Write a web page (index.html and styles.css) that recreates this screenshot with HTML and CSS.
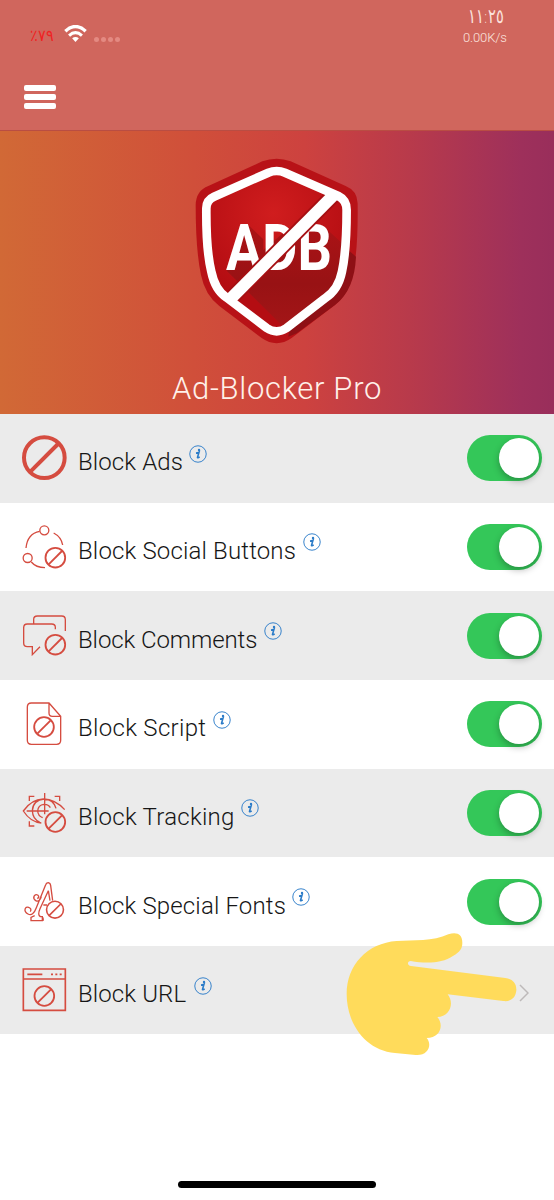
FILE: index.html
```html
<!DOCTYPE html>
<html lang="en">
<head>
<meta charset="utf-8">
<title>Ad-Blocker Pro</title>
<link rel="stylesheet" href="styles.css">
</head>
<body>
<svg class="defs" width="0" height="0">
  <defs>
    <g id="ban"><circle r="29.5" fill="none" stroke-width="5.5"/><path d="M-20 20L20-20" stroke-width="5.5"/></g>
    <symbol id="info" viewBox="0 0 54 54"><circle cx="27" cy="27" r="24.7" fill="none" stroke="#2a7bc8" stroke-width="2.8"/><circle cx="30" cy="15" r="3.6" fill="#2a7bc8"/><path d="M21 24.500Q26 24 30 21.500L25.500 37Q25 40 32 35.500" fill="none" stroke="#2a7bc8" stroke-width="4.8"/></symbol>
  </defs>
</svg>
<div class="screen">
  <header class="navbar">
    <div class="status">
      <div class="status-left">
        <span class="battery"><bdo dir="ltr">٪٧٩</bdo></span>
        <svg class="wifi" viewBox="0 0 68 50"><path d="M4 18Q34-9 64 18" fill="none" stroke="#fff" stroke-width="10"/><path d="M15 31Q34 14 53 31" fill="none" stroke="#fff" stroke-width="9"/><path d="M24 39Q34 31 44 39L34 50Z" fill="#fff"/></svg>
        <span class="signal"><i></i><i></i><i></i><i></i></span>
      </div>
      <div class="status-right">
        <span class="time"><bdo dir="ltr">١١:٢٥</bdo></span>
        <span class="speed">0.00K/s</span>
      </div>
    </div>
    <div class="menu"><i></i><i></i><i></i></div>
  </header>

  <section class="hero">
    <svg class="logo" viewBox="45 24 490 560">
      <defs>
        <radialGradient id="red" gradientUnits="userSpaceOnUse" cx="280" cy="190" r="260"><stop offset="0" stop-color="#d01d1e"/><stop offset="1" stop-color="#b40d12"/></radialGradient>
        <linearGradient id="shade" x1="0" y1="0" x2="0" y2="1"><stop offset="0" stop-color="#ac1316"/><stop offset=".5" stop-color="#981214"/><stop offset="1" stop-color="#a81718"/></linearGradient>
        <clipPath id="inner"><path d="M290 64L480 145Q500 150 500 175Q500 300 487 370Q478 420 445 446L320 530Q290 556 258 530L130 446Q97 420 90 370Q78 290 79 170Q79 150 100 142Z"/></clipPath>
      </defs>
      <path d="M247 34Q290 18 332 34L497 108Q532 122 533 160Q535 300 518 375Q508 430 465 465L335 564Q290 595 245 564L118 468Q75 435 63 375Q47 300 47 165Q48 122 85 108Z" fill="#b81217"/>
      <path d="M505 300L528 320Q524 420 465 465L350 550L325 560L330 530L480 410Z" fill="#8e1015"/>
      <g clip-path="url(#inner)">
        <path d="M60 40H520V580H60Z" fill="url(#red)"/>
        <path d="M202 222L250 268V300L320 240L360 260L430 228L530 320V580H360L140 362Z" fill="url(#shade)"/>
      </g>
      <text class="logo-text" x="138" y="361" textLength="318" lengthAdjust="spacingAndGlyphs">ADB</text>
      <path d="M154 444L462 134" stroke="#a50f12" stroke-width="47"/>
      <path d="M154 444L462 134" stroke="#fff" stroke-width="36"/>
      <path d="M265 68Q290 58 315 68L475 138Q500 150 500 180Q500 300 486 365Q475 420 435 445L320 534Q290 554 260 534L140 443Q105 420 94 365Q78 300 79 175Q79 150 102 140Z" fill="none" stroke="#fff" stroke-width="26"/>
    </svg>
    <h1>Ad-Blocker Pro</h1>
  </section>

  <main class="list">
    <div class="row">
      <svg class="icon" viewBox="60 61 144 144"><circle cx="133" cy="132" r="61" fill="none" stroke-width="12"/><path d="M92 173L174 91" stroke-width="12"/></svg>
      <span class="label l-ads">Block Ads</span><svg class="info"><use href="#info"/></svg><span class="toggle"></span>
    </div>
    <div class="row">
      <svg class="icon" viewBox="60 327 144 144"><circle cx="133" cy="349" r="13.500"/><circle cx="83" cy="432" r="13.500"/><path d="M78 402Q82 359 119 352M161 357Q184 369 188 393M94 444Q108 461 135 461"/><use href="#ban" x="166" y="431"/></svg>
      <span class="label l-social">Block Social Buttons</span><svg class="info"><use href="#info"/></svg><span class="toggle"></span>
    </div>
    <div class="row">
      <svg class="icon" viewBox="60 65 144 144"><path d="M101 100V87Q101 77 112 77H185Q196 77 196 88V122M166 117V111Q166 101 155 101H82Q71 101 71 112V158Q71 169 82 169H97V193L120 169"/><use href="#ban" x="166" y="163"/></svg>
      <span class="label l-comments">Block Comments</span><svg class="info"><use href="#info"/></svg><span class="toggle"></span>
    </div>
    <div class="row">
      <svg class="icon" viewBox="60 331 144 144"><path d="M94 340H147L182 380V452Q182 464 170 464H94Q82 464 82 452V352Q82 340 94 340ZM147 340V370Q147 380 157 380H182"/><use href="#ban" x="132" y="412"/></svg>
      <span class="label l-script">Block Script</span><svg class="info"><use href="#info"/></svg><span class="toggle"></span>
    </div>
    <div class="row">
      <svg class="icon" viewBox="60 63 144 144"><path d="M88 99V85H103M164 85H179V99M88 160V174H103M134 75V139M80 129H146M194 125Q166 94 130 93Q94 94 70 129Q92 163 124 165M168 121Q160 94 133 93Q99 96 97 128Q98 153 119 162M151 119Q145 108 132 109Q114 111 113 129Q114 144 128 149"/><use href="#ban" x="166" y="162"/></svg>
      <span class="label l-tracking">Block Tracking</span><svg class="info"><use href="#info"/></svg><span class="toggle"></span>
    </div>
    <div class="row">
      <svg class="icon" viewBox="60 329 144 144"><path d="M137 349Q140 343 145 343Q151 344 152 352L158 397M137 349L109 418Q99 445 84 437C69 429 75 413 86 417Q96 421 91 430M124 385Q119 403 107 397C96 390 103 375 113 380Q120 386 112 391M145 367L120 421Q112 439 121 445H127V457H93V447L104 442M145 367L150 397M130 410H141M127 445Q130 448 130 457"/><use href="#ban" transform="translate(165 424) scale(.86)"/></svg>
      <span class="label l-fonts">Block Special Fonts</span><svg class="info"><use href="#info"/></svg><span class="toggle"></span>
    </div>
    <div class="row">
      <svg class="icon" viewBox="60 595 144 144"><path d="M70 604H196V728H70ZM70 634H196" stroke-width="5"/><path d="M82 620H127M153 620H159M166 620H172M179 620H185" stroke-width="5"/><use href="#ban" x="133" y="685"/></svg>
      <span class="label l-url">Block URL</span><svg class="info"><use href="#info"/></svg>
      <svg class="chevron" viewBox="0 0 10 18"><path d="M1 1L9 9L1 17" fill="none" stroke="#bdb9b9" stroke-width="1.500"/></svg>
    </div>
  </main>

  <svg class="hand" viewBox="0 0 672 630"><path d="M200 243C250 240 310 245 355 223C380 215 397 222 397 248C397 267 388 276 370 287C335 311 288 311 242 303C231 303 231 317 243 318L526 354C548 357 560 370 559 391C557 414 542 426 520 423L353 403C374 429 360 469 322 471C343 495 331 534 290 534C307 553 296 588 257 585L195 579C106 571 50 491 50 402C50 315 112 249 200 243Z" fill="#ffdb5b"/></svg>
  <div class="home"></div>
</div>
</body>
</html>
```
FILE: styles.css
```css
* { box-sizing: border-box; }
body { margin: 0; background: #fff; }
.defs { position: absolute; }
.screen {
  position: relative;
  width: 554px;
  height: 1200px;
  overflow: hidden;
  background: #fff;
  font-family: Roboto, "Open Sans", sans-serif;
  font-weight: 300;
}
.navbar {
  height: 131px;
  padding: 6px 38px 0 24px;
  background: #d0665d;
  border-bottom: 1px solid #b94d43;
}
.status { display: flex; justify-content: space-between; height: 79px; }
.status-left { display: flex; padding: 19px 0 0 6px; }
.battery {
  width: 34px;
  font: 200 13px/22px "DejaVu Sans", sans-serif;
  color: #ef2222;
}
.battery bdo, .time bdo { display: inline-block; transform-origin: 0 50%; }
.battery bdo { transform: scale(1.12, 1.25); }
.time bdo { transform: scale(.95, 1.3); }
.wifi { width: 23px; height: 17px; margin-right: 7px; }
.signal { display: flex; gap: 2px; padding-top: 12px; }
.signal i { width: 5px; height: 5px; border-radius: 50%; background: #e48a82; }
.status-right { display: flex; flex-direction: column; width: 54px; color: #fbe3dd; padding-left: 1px; }
.time { height: 23px; padding-left: 5px; font: 200 15px/20px "DejaVu Sans", sans-serif; }
.speed { font-size: 13px; line-height: 17px; letter-spacing: -.15px; }
.menu { display: flex; flex-direction: column; gap: 3.500px; width: 32px; }
.menu i { height: 5.500px; border-radius: 2px; background: #fff; }
.hero {
  height: 283px;
  padding-top: 27px;
  display: flex;
  flex-direction: column;
  align-items: center;
  background: linear-gradient(90deg, #d16936 0%, #d04f3a 35%, #cd423f 55%, #b83a4b 74%, #9e305b 94%, #992e5b 100%);
}
.logo { width: 163.300px; height: 186.700px; flex: none; }
.logo-text { font: 700 194px Roboto, sans-serif; fill: #fff; }
h1 {
  margin: 24px 0 0;
  font-size: 31px;
  line-height: 40px;
  font-weight: 300;
  letter-spacing: .7px;
  color: #fff1ea;
  white-space: nowrap;
}
.list { display: flex; flex-direction: column; height: 620.500px; }
.row {
  flex: 1;
  display: flex;
  align-items: center;
  padding: 0 12px 0 20px;
  background: #fff;
}
.row:nth-child(odd) { background: #ebebeb; }
.icon { width: 48px; height: 48px; flex: none; margin-right: 9px; fill: none; stroke: #d54c40; stroke-width: 4; }
.label { font-size: 24px; line-height: 30px; color: #161616; white-space: nowrap; padding: 8px 0 0 1px; flex: none; }
.l-ads { width: 109.500px; letter-spacing: .1px; }
.l-social { width: 223.500px; letter-spacing: .15px; }
.l-comments { width: 184.500px; letter-spacing: -.1px; }
.l-script { width: 133.500px; letter-spacing: .3px; }
.l-tracking { width: 161.500px; letter-spacing: .25px; }
.l-fonts { width: 212.500px; letter-spacing: .15px; }
.l-url { width: 114.500px; letter-spacing: .1px; }
.info { width: 18px; height: 18px; margin: 0 auto 9px 2px; flex: none; }
.toggle {
  width: 75px;
  height: 46px;
  flex: none;
  padding: 3px;
  border-radius: 23px;
  background: #34c759;
}
.toggle::before {
  content: "";
  display: block;
  width: 40px;
  height: 40px;
  margin-left: 29px;
  border-radius: 50%;
  background: #fff;
  box-shadow: 0 3px 7px rgba(0, 0, 0, .28);
}
.chevron { width: 10px; height: 18px; margin: 5px 13px 0 0; }
.hand { position: absolute; left: 330px; top: 860px; width: 224px; height: 210px; }
.home { width: 198px; height: 7px; margin: 146px auto 0; border-radius: 4px; background: #000; }
```
